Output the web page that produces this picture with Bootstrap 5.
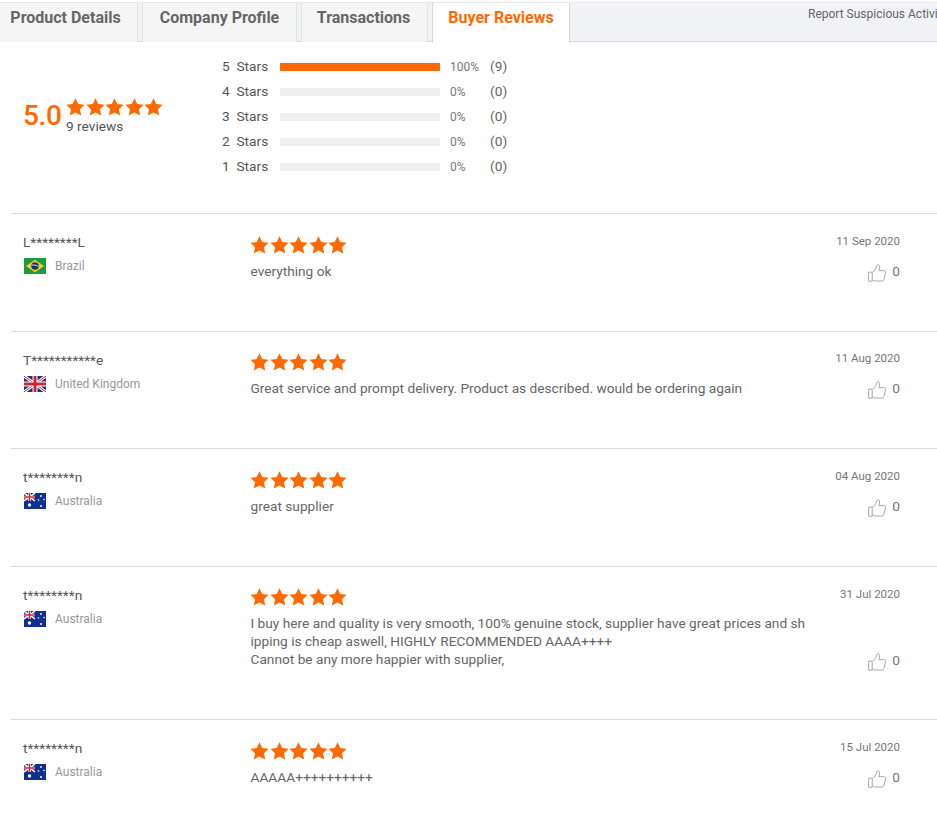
<!DOCTYPE html>
<html lang="en">
<head>
<meta charset="UTF-8">
<title>Buyer Reviews</title>
<link href="https://cdn.jsdelivr.net/npm/bootstrap@5.3.0/dist/css/bootstrap.min.css" rel="stylesheet">
<style>
body { font-family: Roboto, "Liberation Sans", sans-serif; font-size: 13.7px; color: #666; background: #fff; overflow-x: hidden; }
.tab-bar { margin-top: 2px; height: 40px; background: #f1f2f6; border-top: 1px solid #e8e8ea; border-bottom: 1px solid #dcdcde; position: relative; }
.tab-bar .nav-link { height: 39px; margin-right: 4px; padding: 0; border: 1px solid #e2e2e4; border-top: 0; border-bottom: 0; background: #f5f5f6; color: #666; font-size: 16px; font-weight: 700; line-height: 29px; text-align: center; border-radius: 0; }
.tab-bar .nav-link.active { height: 40px; background: #fff; color: #ff6a00; border-color: #d8d8da; }
.tab-1 { width: 138px; border-left: 0 !important; padding-right: 6px !important; }
.tab-2 { width: 155px; }
.tab-3 { width: 127px; padding-right: 2px !important; }
.tab-4 { width: 138px; }
.report-link { font-size: 12px; color: #666; margin-left: 234px; margin-top: 2px; white-space: nowrap; }
.summary { height: 171px; }
.score-box { padding-left: 23px; width: 222px; margin-top: 56px; }
.score-num { font-size: 28px; font-weight: 500; line-height: 36px; color: #ff6a00; width: 43px; letter-spacing: -.3px; }
.score-count { font-size: 13.7px; line-height: 16px; color: #555; margin-top: 2px; }
.dist-list { padding-top: 12px; }
.dist-row { height: 25px; }
.dist-label { width: 58px; white-space: pre; color: #555; }
.dist-pct { width: 40px; font-size: 12px; color: #777; margin-left: 10px; }
.dist-count { color: #666; }
.dist-bar { width: 160px; height: 8px; border-radius: 0; background: #eeeff1; }
.dist-bar .progress-bar { background: #ff6a00; }
.star-line { fill: #ff6a00; }
.stars-sm svg { width: 19px; height: 18px; margin-right: .6px; display: block; }
.stars-top { margin-top: 2px; margin-bottom: -1px; }
.review-row { margin-left: 11px; border-top: 1px solid #dcdcdc; padding-top: 20px; height: 118px; }
.review-row.short { height: 117px; }
.review-row.tall { height: 153px; }
.short .review-body, .tall .review-body { margin-top: -1px; }
.short .review-date { margin-top: -1px; margin-bottom: 1px; }
.reviewer { width: 239px; padding-left: 12px; }
.reviewer-name { font-size: 13.7px; line-height: 17px; color: #555; }
.country { font-size: 12px; line-height: 16px; color: #999; margin-top: 7px; padding-left: 1px; }
.flag-icon { width: 22px; height: 16px; margin-right: 9px; display: block; }
.review-body { width: 570px; }
.review-body p { margin: 0; font-size: 13.7px; line-height: 18px; color: #666; margin-top: 9px; padding-left: .5px; }
.review-side { width: 106px; text-align: right; padding-right: 26px; margin-top: -1px; }
.review-date { font-size: 11.5px; line-height: 16px; color: #777; }
.like { margin-top: 14px; color: #777; line-height: 17px; }
.like.low { margin-top: 50px; }
.like svg { width: 18px; height: 18px; margin-right: 6px; position: relative; top: 1px; }
</style>
</head>
<body>
<svg width="0" height="0" class="d-block position-absolute">
    <defs>
        <symbol id="star" viewBox="0 0 20 19"><path d="M10 .3l2.9 6.1 6.7.8-4.9 4.6 1.3 6.6L10 15.2l-6 3.2 1.3-6.6L.4 7.2l6.7-.8z"/></symbol>
        <symbol id="thumb" viewBox="0 0 18 18"><path d="M.6 8.2h3.600v9H.6zM4.200 8.600c2.400-1.600 4-4 4.600-6.600.2-1 .7-1.500 1.400-1.400 1.500.2 1.900 2.300.6 6.100h5.400c1.200 0 1.700 1 1.400 2l-1.800 7c-.2.800-.8 1.300-1.700 1.300H7.400c-1.300 0-2.200-.6-3.200-1" fill="none" stroke="#a8a8a8" stroke-width="1"/></symbol>
        <symbol id="flag-br" viewBox="0 0 22 16"><rect width="22" height="16" fill="#1f9a3d"/><path d="M11 1.800L20 8l-9 6.200L2 8z" fill="#f2d41c"/><circle cx="11" cy="8" r="3.800" fill="#1d2f7c"/><path d="M7.400 7.200c2.500-.4 5-.1 7.100 1.300" stroke="#fff" stroke-width=".8" fill="none"/></symbol>
        <symbol id="flag-uk" viewBox="0 0 22 16"><rect width="22" height="16" fill="#23306f"/><path d="M0 0l22 16M22 0L0 16" stroke="#fff" stroke-width="3"/><path d="M0 0l22 16M22 0L0 16" stroke="#c8283a" stroke-width="1"/><path d="M11 0v16M0 8h22" stroke="#fff" stroke-width="5"/><path d="M11 0v16M0 8h22" stroke="#c8283a" stroke-width="3"/></symbol>
        <symbol id="flag-au" viewBox="0 0 22 16"><rect width="22" height="16" fill="#10308f"/><rect width="11" height="8" fill="#23306f"/><path d="M0 0l11 8M11 0L0 8" stroke="#fff" stroke-width="1.500"/><path d="M5.500 0v8M0 4h11" stroke="#fff" stroke-width="2.600"/><path d="M5.500 0v8M0 4h11" stroke="#d0283a" stroke-width="1.400"/><circle cx="5.500" cy="12" r="1.700" fill="#fff"/><circle cx="17" cy="3" r=".9" fill="#fff"/><circle cx="20" cy="6.500" r=".8" fill="#fff"/><circle cx="14.500" cy="7" r=".8" fill="#fff"/><circle cx="17" cy="13" r="1" fill="#fff"/></symbol>
    </defs>
</svg>

<div class="tab-bar d-flex">
    <ul class="nav flex-nowrap">
        <li class="nav-item"><a class="nav-link tab-1" href="#">Product Details</a></li>
        <li class="nav-item"><a class="nav-link tab-2" href="#">Company Profile</a></li>
        <li class="nav-item"><a class="nav-link tab-3" href="#">Transactions</a></li>
        <li class="nav-item"><a class="nav-link tab-4 active" href="#">Buyer Reviews</a></li>
    </ul>
    <div class="report-link">Report Suspicious Activity</div>
</div>

<div class="summary d-flex">
    <div class="score-box d-flex">
        <div class="score-num">5.0</div>
        <div>
            <div class="d-flex stars-sm star-line">
                <svg><use href="#star"/></svg><svg><use href="#star"/></svg><svg><use href="#star"/></svg><svg><use href="#star"/></svg><svg><use href="#star"/></svg>
            </div>
            <div class="score-count">9 reviews</div>
        </div>
    </div>
    <div class="dist-list">
        <div class="dist-row d-flex align-items-center"><div class="dist-label">5  Stars</div><div class="progress dist-bar"><div class="progress-bar" style="width:100%"></div></div><div class="dist-pct">100%</div><div class="dist-count">(9)</div></div>
        <div class="dist-row d-flex align-items-center"><div class="dist-label">4  Stars</div><div class="progress dist-bar"><div class="progress-bar" style="width:0%"></div></div><div class="dist-pct">0%</div><div class="dist-count">(0)</div></div>
        <div class="dist-row d-flex align-items-center"><div class="dist-label">3  Stars</div><div class="progress dist-bar"><div class="progress-bar" style="width:0%"></div></div><div class="dist-pct">0%</div><div class="dist-count">(0)</div></div>
        <div class="dist-row d-flex align-items-center"><div class="dist-label">2  Stars</div><div class="progress dist-bar"><div class="progress-bar" style="width:0%"></div></div><div class="dist-pct">0%</div><div class="dist-count">(0)</div></div>
        <div class="dist-row d-flex align-items-center"><div class="dist-label">1  Stars</div><div class="progress dist-bar"><div class="progress-bar" style="width:0%"></div></div><div class="dist-pct">0%</div><div class="dist-count">(0)</div></div>
    </div>
</div>

<div class="review-row d-flex">
    <div class="reviewer">
        <div class="reviewer-name">L********L</div>
        <div class="country d-flex align-items-center"><svg class="flag-icon"><use href="#flag-br"/></svg>Brazil</div>
    </div>
    <div class="review-body">
        <div class="d-flex stars-sm star-line stars-top"><svg><use href="#star"/></svg><svg><use href="#star"/></svg><svg><use href="#star"/></svg><svg><use href="#star"/></svg><svg><use href="#star"/></svg></div>
        <p>everything ok</p>
    </div>
    <div class="review-side">
        <div class="review-date">11 Sep 2020</div>
        <div class="like"><svg><use href="#thumb"/></svg>0</div>
    </div>
</div>

<div class="review-row short d-flex">
    <div class="reviewer">
        <div class="reviewer-name">T***********e</div>
        <div class="country d-flex align-items-center"><svg class="flag-icon"><use href="#flag-uk"/></svg>United Kingdom</div>
    </div>
    <div class="review-body">
        <div class="d-flex stars-sm star-line stars-top"><svg><use href="#star"/></svg><svg><use href="#star"/></svg><svg><use href="#star"/></svg><svg><use href="#star"/></svg><svg><use href="#star"/></svg></div>
        <p>Great service and prompt delivery. Product as described. would be ordering again</p>
    </div>
    <div class="review-side">
        <div class="review-date">11 Aug 2020</div>
        <div class="like"><svg><use href="#thumb"/></svg>0</div>
    </div>
</div>

<div class="review-row d-flex">
    <div class="reviewer">
        <div class="reviewer-name">t********n</div>
        <div class="country d-flex align-items-center"><svg class="flag-icon"><use href="#flag-au"/></svg>Australia</div>
    </div>
    <div class="review-body">
        <div class="d-flex stars-sm star-line stars-top"><svg><use href="#star"/></svg><svg><use href="#star"/></svg><svg><use href="#star"/></svg><svg><use href="#star"/></svg><svg><use href="#star"/></svg></div>
        <p>great supplier</p>
    </div>
    <div class="review-side">
        <div class="review-date">04 Aug 2020</div>
        <div class="like"><svg><use href="#thumb"/></svg>0</div>
    </div>
</div>

<div class="review-row tall d-flex">
    <div class="reviewer">
        <div class="reviewer-name">t********n</div>
        <div class="country d-flex align-items-center"><svg class="flag-icon"><use href="#flag-au"/></svg>Australia</div>
    </div>
    <div class="review-body">
        <div class="d-flex stars-sm star-line stars-top"><svg><use href="#star"/></svg><svg><use href="#star"/></svg><svg><use href="#star"/></svg><svg><use href="#star"/></svg><svg><use href="#star"/></svg></div>
        <p>I buy here and quality is very smooth, 100% genuine stock, supplier have great prices and sh<br>ipping is cheap aswell, HIGHLY RECOMMENDED AAAA++++<br>Cannot be any more happier with supplier,</p>
    </div>
    <div class="review-side">
        <div class="review-date">31 Jul 2020</div>
        <div class="like low"><svg><use href="#thumb"/></svg>0</div>
    </div>
</div>

<div class="review-row d-flex">
    <div class="reviewer">
        <div class="reviewer-name">t********n</div>
        <div class="country d-flex align-items-center"><svg class="flag-icon"><use href="#flag-au"/></svg>Australia</div>
    </div>
    <div class="review-body">
        <div class="d-flex stars-sm star-line stars-top"><svg><use href="#star"/></svg><svg><use href="#star"/></svg><svg><use href="#star"/></svg><svg><use href="#star"/></svg><svg><use href="#star"/></svg></div>
        <p>AAAAA++++++++++</p>
    </div>
    <div class="review-side">
        <div class="review-date">15 Jul 2020</div>
        <div class="like"><svg><use href="#thumb"/></svg>0</div>
    </div>
</div>
</body>
</html>
